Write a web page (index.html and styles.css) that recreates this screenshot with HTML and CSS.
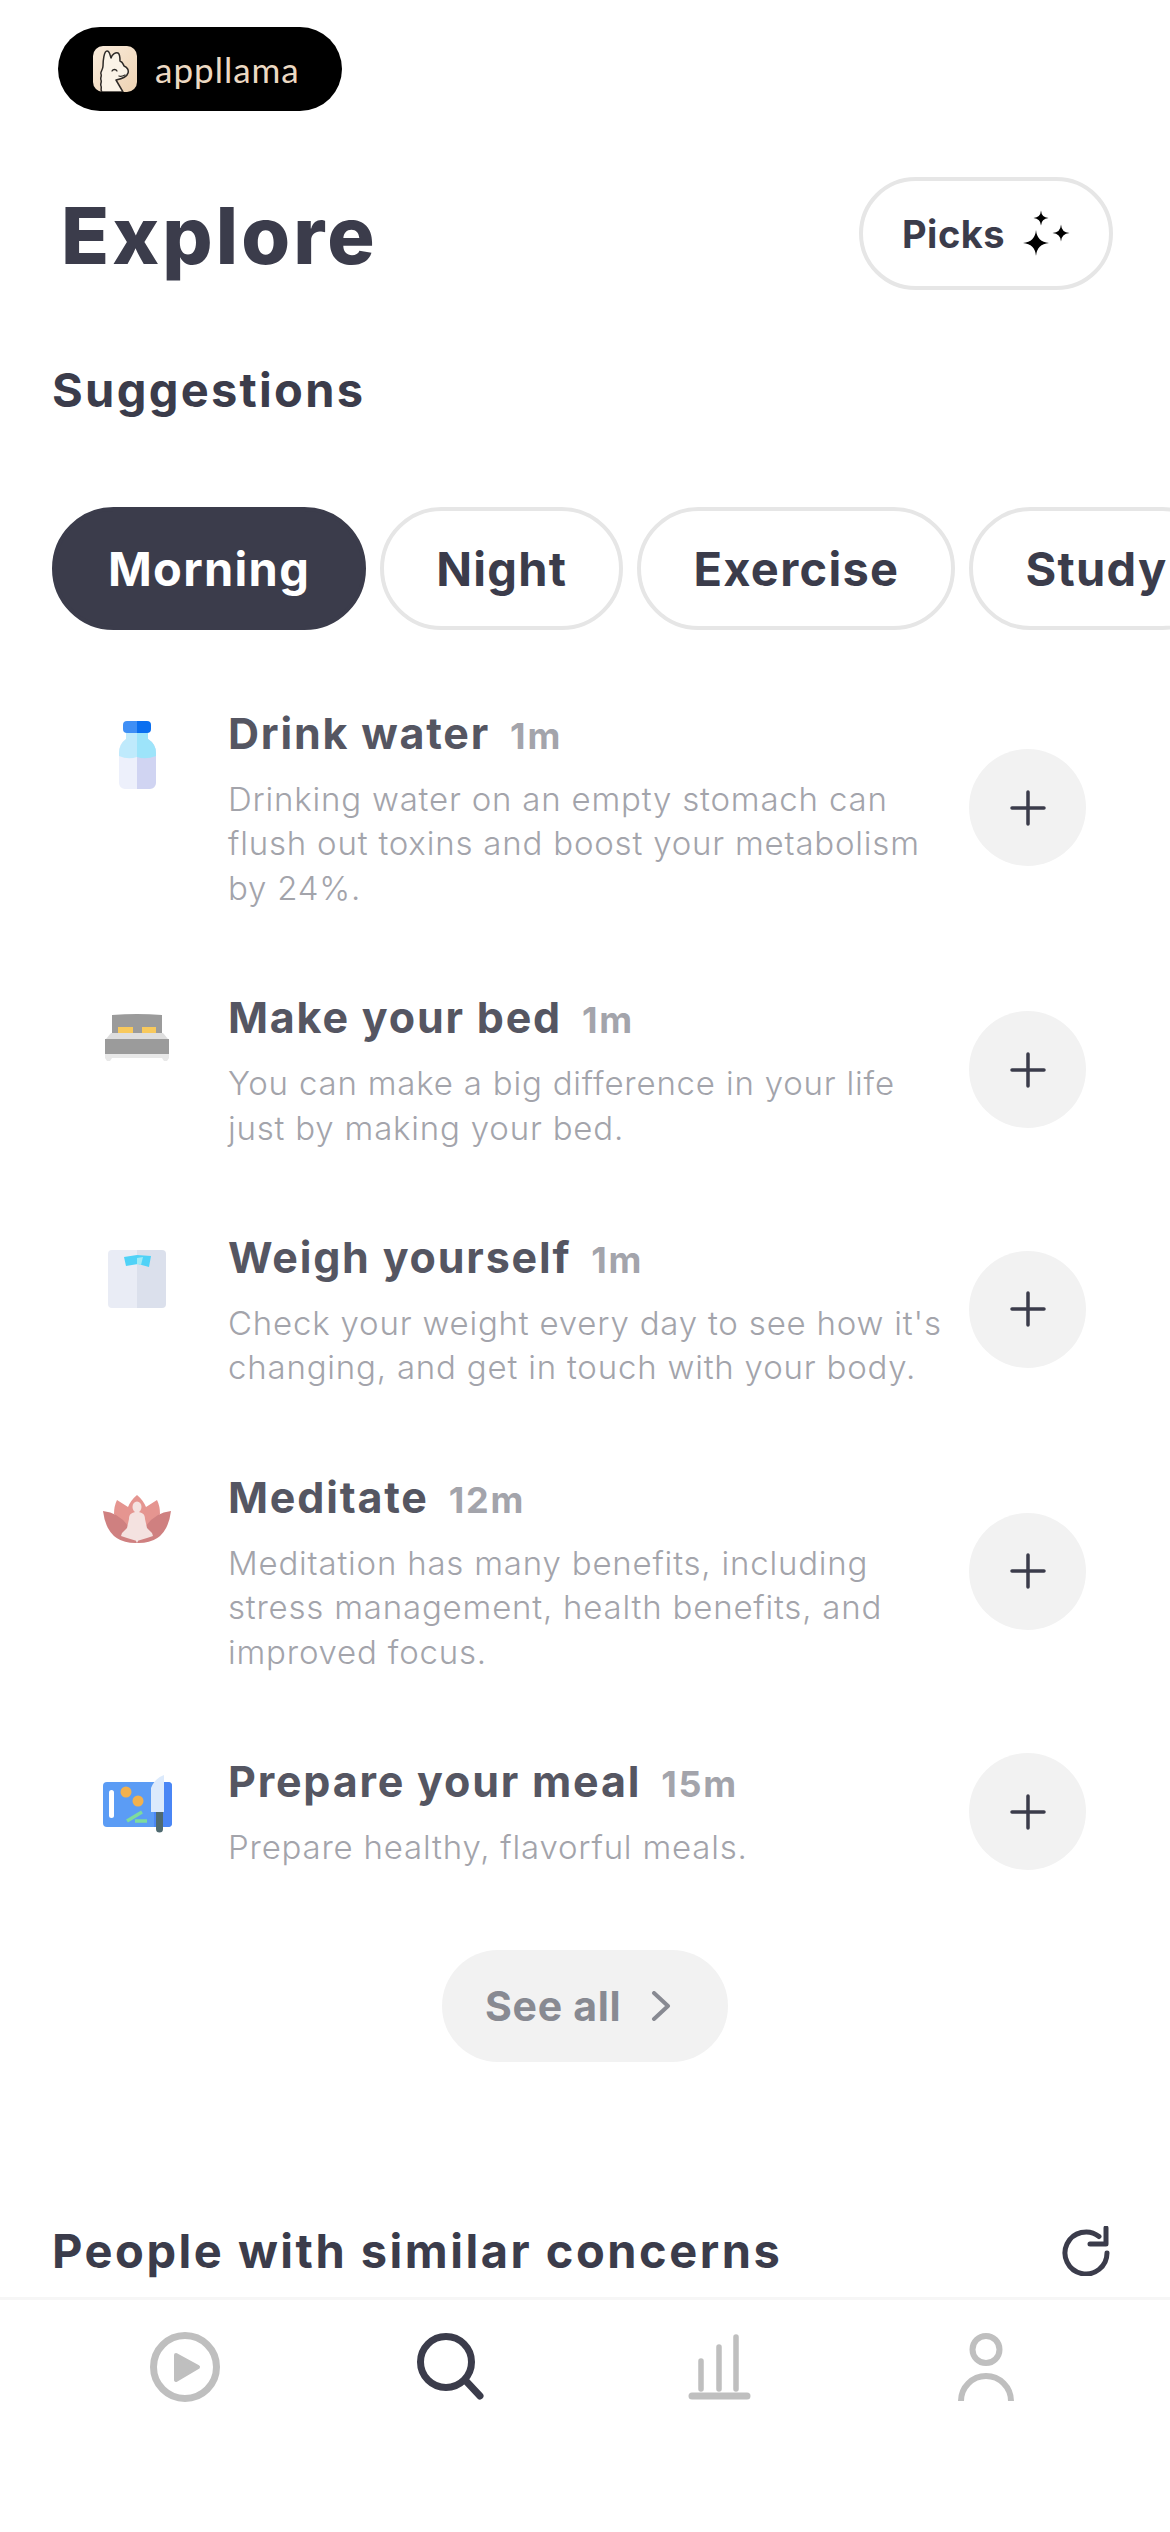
FILE: index.html
```html
<!DOCTYPE html>
<html lang="en">
<head>
<meta charset="utf-8">
<title>Explore</title>
<link rel="stylesheet" href="styles.css">
</head>
<body>
<div class="app">
  <main class="content">
    <div class="logo">
      <svg class="logo-mark" viewBox="0 0 44 46" width="44" height="46">
        <defs><linearGradient id="lg" x1="0" y1="0" x2="1" y2="1"><stop offset="0" stop-color="#f9ecdc"/><stop offset="1" stop-color="#eed2b2"/></linearGradient></defs>
        <rect width="44" height="46" rx="10" fill="url(#lg)"/>
        <path d="M9 46c-2-2 0-4-1-6s1-4 0-6 1-4 0-6 2-4 2-8C10 15 11 5 14 5c3 0 3 5 4 7 1-4 5-6 7-5 2 1 2 5 2 8 3 1 3 3 4 5 3 1 5 4 4 7-1 4-7 6-12 7l7 12z" fill="#fbf3e7" stroke="#2f2b28" stroke-width="1.500" stroke-linejoin="round"/>
        <path d="M19 25c1-2 4-2 5 0M26 30c2 1 4 0 6-1" fill="none" stroke="#2f2b28" stroke-width="1.300" stroke-linecap="round"/>
      </svg>
      <span class="logo-text">appllama</span>
    </div>

    <header class="head">
      <h1 class="title">Explore</h1>
      <button class="picks">
        <span>Picks</span>
        <svg class="sparkles" viewBox="0 0 48 48" width="48" height="48">
          <path d="M13 20Q14 32 26 33Q14 34 13 46Q12 34 0 33Q12 32 13 20Z"/>
          <path d="M18 0.500Q18.500 7.500 25.500 8Q18.500 8.500 18 15.500Q17.500 8.500 10.500 8Q17.500 7.500 18 0.500Z"/>
          <path d="M38 14.500Q38.500 22.500 46.500 23Q38.500 23.500 38 31.500Q37.500 23.500 29.500 23Q37.500 22.500 38 14.500Z"/>
        </svg>
      </button>
    </header>

    <h2 class="section">Suggestions</h2>

    <nav class="tabs">
      <span class="tab tab-active">Morning</span>
      <span class="tab">Night</span>
      <span class="tab">Exercise</span>
      <span class="tab">Study</span>
    </nav>

    <ul class="list">
      <li class="row">
        <svg class="pic" viewBox="0 0 70 70" width="70" height="70">
          <path d="M24 12h11v57H23a6 6 0 0 1-6-6V33q0-9 7-14z" fill="#edf0fb"/>
          <path d="M46 12H35v57h13a6 6 0 0 0 6-6V33q0-9-8-14z" fill="#d0d4f2"/>
          <path d="M24 12h11v25q-9 3-18-1v-3q0-9 7-14z" fill="#bfeafc"/>
          <path d="M46 12H35v25q9 3 19-1v-3q0-9-8-14z" fill="#9de4fa"/>
          <path d="M35 1H25a4 4 0 0 0-4 4v4a4 4 0 0 0 4 4h10z" fill="#3f8ff5"/>
          <path d="M35 1h10a4 4 0 0 1 4 4v4a4 4 0 0 1-4 4H35z" fill="#0a6ff0"/>
        </svg>
        <div class="text">
          <h3 class="name">Drink water <span class="time">1m</span></h3>
          <p class="desc">Drinking water on an empty stomach can flush out toxins and boost your metabolism by 24%.</p>
        </div>
        <button class="add"><svg viewBox="0 0 36 36" width="36" height="36"><path d="M18 2v32M2 18h32"/></svg></button>
      </li>
      <li class="row">
        <svg class="pic" viewBox="0 0 70 70" width="70" height="70">
          <path d="M10 11q25-2 50 0v21H10z" fill="#9b9b9b"/>
          <rect x="16" y="23" width="15" height="7" fill="#f8c95c"/>
          <rect x="40" y="23" width="14" height="7" fill="#f8c95c"/>
          <path d="M9 29h52l5 6H4z" fill="#dedede"/>
          <rect x="3" y="35" width="64" height="15" fill="#9b9b9b"/>
          <path d="M3 50h64v4l-2 3h-3l-2-3H10l-2 3H5l-2-3z" fill="#e8e8e8"/>
        </svg>
        <div class="text">
          <h3 class="name">Make your bed <span class="time">1m</span></h3>
          <p class="desc">You can make a big difference in your life just by making your bed.</p>
        </div>
        <button class="add"><svg viewBox="0 0 36 36" width="36" height="36"><path d="M18 2v32M2 18h32"/></svg></button>
      </li>
      <li class="row">
        <svg class="pic" viewBox="0 0 70 70" width="70" height="70">
          <path d="M35 6H10a4 4 0 0 0-4 4v50a4 4 0 0 0 4 4h25z" fill="#e9ecf5"/>
          <path d="M35 6h25a4 4 0 0 1 4 4v50a4 4 0 0 1-4 4H35z" fill="#dbe0ec"/>
          <path d="M22 13l13-2 14 1-2 11-11-3-12 2z" fill="#4fd2f7"/>
          <path d="M35 14l6-1-2 8-4-1z" fill="#9feaf5"/>
        </svg>
        <div class="text">
          <h3 class="name">Weigh yourself <span class="time">1m</span></h3>
          <p class="desc">Check your weight every day to see how it's changing, and get in touch with your body.</p>
        </div>
        <button class="add"><svg viewBox="0 0 36 36" width="36" height="36"><path d="M18 2v32M2 18h32"/></svg></button>
      </li>
      <li class="row">
        <svg class="pic" viewBox="0 0 70 70" width="70" height="70">
          <path d="M35 11Q41 16 44 23L55 16Q58 22 58 30L35 52 12 30Q12 22 15 16L26 23Q29 16 35 11Z" fill="#e59590"/>
          <path d="M1 27Q24 29 35 59Q5 60 1 27Z" fill="#cf8080"/>
          <path d="M69 27Q46 29 35 59Q65 60 69 27Z" fill="#cf8080"/>
          <ellipse cx="35" cy="23" rx="4.500" ry="5.500" fill="#f4e2e0"/>
          <path d="M35 28c5 0 8 2 8 7l2 9 5 5 1 3-6 2-10 3-10-3-6-2 1-3 5-5 2-9c0-5 3-7 8-7z" fill="#f4e2e0"/>
        </svg>
        <div class="text">
          <h3 class="name">Meditate <span class="time">12m</span></h3>
          <p class="desc">Meditation has many benefits, including stress management, health benefits, and improved focus.</p>
        </div>
        <button class="add"><svg viewBox="0 0 36 36" width="36" height="36"><path d="M18 2v32M2 18h32"/></svg></button>
      </li>
      <li class="row">
        <svg class="pic" viewBox="0 0 70 70" width="70" height="70">
          <rect x="1" y="14" width="69" height="45" rx="4" fill="#5b9cf5"/>
          <path d="M52 14h14a4 4 0 0 1 4 4v37a4 4 0 0 1-4 4H52z" fill="#4a86f5"/>
          <rect x="7" y="22" width="5" height="28" rx="2.500" fill="#fff"/>
          <circle cx="24" cy="24" r="5.500" fill="#f3b14e"/>
          <circle cx="36" cy="33" r="5.500" fill="#f3b14e"/>
          <path d="M25 53l15-9M33 53h12" stroke="#7edc9c" stroke-width="3.500" fill="none"/>
          <path d="M49 44V20q4-10 13-13v37z" fill="#dceafc"/>
          <path d="M54 44h7v17a3.500 3.500 0 0 1-7 0z" fill="#4f6a70"/>
        </svg>
        <div class="text">
          <h3 class="name">Prepare your meal <span class="time">15m</span></h3>
          <p class="desc">Prepare healthy, flavorful meals.</p>
        </div>
        <button class="add"><svg viewBox="0 0 36 36" width="36" height="36"><path d="M18 2v32M2 18h32"/></svg></button>
      </li>
    </ul>

    <button class="see-all">
      <span>See all</span>
      <svg viewBox="0 0 20 30" width="20" height="30"><path d="M3 2l14 13L3 28"/></svg>
    </button>

    <div class="people">
      <h2 class="section section-wide">People with similar concerns</h2>
      <svg class="refresh" viewBox="0 0 50 50" width="50" height="50"><path d="M47 27A21 21 0 1 1 39 10.500M46 2v16H30"/></svg>
    </div>
  </main>

  <footer class="tabbar">
    <svg class="nav-icon muted" viewBox="0 0 72 72" width="72" height="72"><circle cx="35" cy="35" r="31.500" fill="none" stroke-width="7"/><path d="M26 23l22 12-22 13z" stroke-width="4" stroke-linejoin="round" class="solid"/></svg>
    <svg class="nav-icon active" viewBox="0 0 72 72" width="72" height="72"><circle cx="30" cy="30" r="25.500" fill="none" stroke-width="7"/><path d="M50 49l14 15" stroke-width="7" stroke-linecap="round" fill="none"/></svg>
    <svg class="nav-icon muted" viewBox="0 0 72 72" width="72" height="72"><path d="M18 29v28M36 15v42M53 5v52" fill="none" stroke-width="5.500" stroke-linecap="round"/><path d="M9 64h55" fill="none" stroke-width="7" stroke-linecap="round"/></svg>
    <svg class="nav-icon muted" viewBox="0 0 72 72" width="72" height="72"><circle cx="37" cy="17.500" r="13.500" fill="none" stroke-width="6"/><path d="M12 69a25 25 0 0 1 50 0" fill="none" stroke-width="6"/></svg>
  </footer>
</div>
</body>
</html>
```
FILE: styles.css
```css
* { box-sizing: border-box; }
html, body { margin: 0; padding: 0; background: #fff; }
body { font-family: Inter, "Liberation Sans", sans-serif; color: #3b3c4b; }
h1, h2, h3, p, ul { margin: 0; padding: 0; }
button { font: inherit; color: inherit; background: none; border: 0; padding: 0; }

.app { height: 2532px; display: flex; flex-direction: column; overflow: hidden; }
.content { height: 2297px; flex: none; overflow: hidden; padding-top: 27px; }

.logo { width: 284px; height: 84px; margin-left: 58px; border-radius: 42px; background: #000; display: flex; align-items: center; padding-left: 35px; gap: 18px; }
.logo-mark { flex: none; }
.logo-text { font-family: Lato, sans-serif; font-weight: 400; font-size: 35px; letter-spacing: 1px; color: #ecd9c3; }

.head { display: flex; align-items: center; justify-content: space-between; margin: 66px 57px 0 61px; }
.title { font-size: 79px; line-height: 110px; padding-top: 3px; font-weight: 800; letter-spacing: 3.1px; }
.picks { width: 254px; height: 113px; border: 4px solid #e6e6e6; border-radius: 57px; display: flex; align-items: center; padding-left: 39px; gap: 18px; font-size: 38px; font-weight: 700; letter-spacing: 0.5px; }
.sparkles { flex: none; fill: #000; }

.section { font-size: 47px; line-height: 60px; font-weight: 700; letter-spacing: 2.3px; }
.section-wide { letter-spacing: 2.5px; }
.content > .section { margin: 70px 0 0 52px; }

.tabs { display: flex; gap: 14px; margin: 87px 0 0 52px; white-space: nowrap; }
.tab { flex: none; height: 123px; border: 4px solid #e6e6e6; border-radius: 62px; padding: 0 52px; display: flex; align-items: center; font-size: 47px; font-weight: 700; letter-spacing: 1.3px; }
.tab-active { background: #3b3c4b; border-color: #3b3c4b; color: #fff; }

.list { list-style: none; margin-top: 75px; display: flex; flex-direction: column; gap: 79px; }
.row { display: flex; align-items: center; padding: 0 84px 0 102px; position: relative; }
.pic { flex: none; align-self: flex-start; margin: 15px 56px 0 0; }
.text { width: 725px; flex: none; }
.name { font-size: 43px; line-height: 56px; font-weight: 700; color: #555662; letter-spacing: 1.8px; margin-bottom: 16px; white-space: nowrap; }
.time { font-size: 36px; line-height: 1; color: #a3a4ab; margin-left: 8px; }
.desc { font-size: 33px; line-height: 44.4px; font-weight: 300; color: #a3a4ab; letter-spacing: 0.8px; }
.add { flex: none; width: 117px; height: 117px; margin-left: auto; border-radius: 50%; background: #f2f2f2; display: flex; align-items: center; justify-content: center; }
.add svg { fill: none; stroke: #3b3c4b; stroke-width: 3.5; stroke-linecap: round; }

.see-all { display: flex; align-items: center; width: 286px; height: 112px; margin: 80px auto 0 442px; padding-left: 43px; gap: 30px; border-radius: 56px; background: #f2f2f2; color: #888a92; font-size: 41px; font-weight: 700; letter-spacing: 0.7px; }
.see-all svg { fill: none; stroke: #888a92; stroke-width: 4; stroke-linecap: round; stroke-linejoin: round; }

.people { display: flex; align-items: center; justify-content: space-between; margin: 159px 60px 0 52px; }
.refresh { fill: none; stroke: #3b3c4b; stroke-width: 5; stroke-linecap: round; stroke-linejoin: round; }

.tabbar { flex: 1; border-top: 3px solid #f6f6f6; padding: 32px 149px 0 150px; display: flex; justify-content: space-between; align-items: flex-start; background: #fff; }
.nav-icon { flex: none; }
.muted { stroke: #bfbfbf; }
.muted .solid { fill: #bfbfbf; }
.active { stroke: #3b3c4b; }
```
